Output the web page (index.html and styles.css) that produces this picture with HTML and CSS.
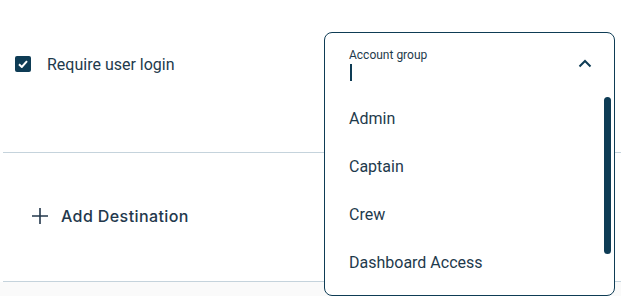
FILE: index.html
```html
<!DOCTYPE html>
<html lang="en">
<head>
    <meta charset="UTF-8">
    <meta name="viewport" content="width=device-width, initial-scale=1.0">
    <title>Destination settings</title>
    <link rel="stylesheet" href="styles.css">
</head>
<body>
    <div class="form">
        <!-- Login row -->
        <div class="row row-login">
            <label class="check">
                <span class="box">
                    <svg width="10" height="8" viewBox="0 0 10 8">
                        <path d="M1 4.2 L3.8 7 L9 1.2" fill="none" stroke="#fff" stroke-width="2"/>
                    </svg>
                </span>
                <span class="check-label">Require user login</span>
            </label>
        </div>

        <!-- Add destination row -->
        <div class="row row-add">
            <button class="add-btn">
                <svg width="16" height="16" viewBox="0 0 16 16">
                    <path d="M8 0 V16 M0 8 H16" stroke="#23384c" stroke-width="1.6"/>
                </svg>
                <span>Add Destination</span>
            </button>
        </div>
    </div>

    <!-- Open select menu -->
    <div class="select-menu">
        <div class="select-head">
            <div class="select-field">
                <span class="select-label">Account group</span>
                <span class="caret"></span>
            </div>
            <svg class="chevron" width="14" height="9" viewBox="0 0 14 9">
                <path d="M1.5 7.5 L7 2 L12.5 7.5" fill="none" stroke="#0e3c55" stroke-width="2"/>
            </svg>
        </div>
        <ul class="options">
            <li>Admin</li>
            <li>Captain</li>
            <li>Crew</li>
            <li>Dashboard Access</li>
        </ul>
        <div class="scrollbar"></div>
    </div>
</body>
</html>
```

FILE: styles.css
```css
* {
    margin: 0;
    padding: 0;
    box-sizing: border-box;
}

body {
    font-family: Roboto, "Liberation Sans", sans-serif;
    background-color: #fafafa;
    color: #1e3a4c;
    height: 296px;
    overflow: hidden;
}

/* Form rows */
.form {
    background-color: #fff;
}

.row {
    margin-left: 3px;
    border-bottom: 1px solid #c5d3dc;
}

.row-login {
    height: 153px;
    padding: 56px 0 0 12px;
}

.check {
    display: flex;
    align-items: center;
    gap: 16px;
    height: 16px;
}

.box {
    width: 16px;
    height: 16px;
    border-radius: 2px;
    background-color: #0e3c55;
    display: flex;
    justify-content: center;
    align-items: center;
}

.check-label {
    font-size: 16px;
    color: #1e3a4c;
}

.row-add {
    height: 129px;
    display: flex;
    align-items: center;
    padding-left: 29px;
}

.add-btn {
    display: flex;
    align-items: center;
    gap: 13px;
    border: none;
    background: none;
    font-family: Inter, "Open Sans", sans-serif;
    font-size: 16px;
    font-weight: 500;
    letter-spacing: 0.4px;
    color: #23384c;
    margin-top: -3px;
}

/* Dropdown overlay */
.select-menu {
    position: absolute;
    left: 324px;
    top: 32px;
    width: 291px;
    height: 264px;
    background-color: #fff;
    border: 1px solid #0e3c55;
    border-radius: 8px;
}

.select-head {
    height: 61px;
    display: flex;
    justify-content: space-between;
    align-items: center;
    padding: 0 22px 0 24px;
}

.select-field {
    display: flex;
    flex-direction: column;
    gap: 2px;
    margin-top: 1px;
}

.select-label {
    font-size: 12px;
    color: #1e3a4c;
}

.caret {
    width: 1.5px;
    height: 17px;
    background-color: #0e3c55;
    margin-left: 1px;
}

.options {
    list-style: none;
}

.options li {
    height: 48px;
    display: flex;
    align-items: center;
    padding-left: 24px;
    font-size: 16px;
    color: #1e3a4c;
}

.scrollbar {
    position: absolute;
    right: 3px;
    top: 64px;
    width: 7px;
    height: 157px;
    border-radius: 4px;
    background-color: #0e3c55;
}
```
